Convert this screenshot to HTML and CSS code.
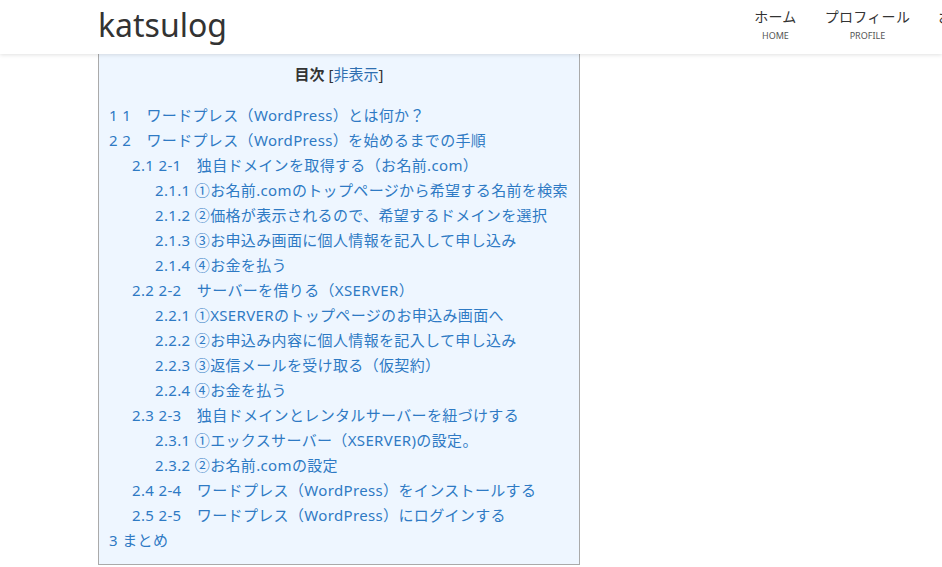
FILE: index.html
```html
<!DOCTYPE html>
<html lang="ja">
<head>
  <meta charset="UTF-8">
  <title>katsulog</title>
  <meta name="viewport" content="width=device-width, initial-scale=1.0">
  <link rel="stylesheet" href="styles.css">
</head>
<body>
<header class="site-header">
  <div class="header-inner">
    <div class="logo">katsulog</div>
    <nav class="global-nav">
      <a href="#"><span class="nav-ja">ホーム</span><span class="nav-en">HOME</span></a>
      <a href="#"><span class="nav-ja">プロフィール</span><span class="nav-en">PROFILE</span></a>
      <a href="#"><span class="nav-ja">お問い合わせ</span><span class="nav-en">CONTACT</span></a>
    </nav>
  </div>
</header>

<div class="content">
  <div class="toc">
    <p class="toc-title">目次 <span class="toc-toggle">[<a href="#">非表示</a>]</span></p>
    <ul class="toc-list">
      <li><a href="#">1 1　ワードプレス（WordPress）とは何か？</a></li>
      <li><a href="#">2 2　ワードプレス（WordPress）を始めるまでの手順</a>
        <ul>
          <li><a href="#">2.1 2-1　独自ドメインを取得する（お名前.com）</a>
            <ul>
              <li><a href="#">2.1.1 ①お名前.comのトップページから希望する名前を検索</a></li>
              <li><a href="#">2.1.2 ②価格が表示されるので、希望するドメインを選択</a></li>
              <li><a href="#">2.1.3 ③お申込み画面に個人情報を記入して申し込み</a></li>
              <li><a href="#">2.1.4 ④お金を払う</a></li>
            </ul>
          </li>
          <li><a href="#">2.2 2-2　サーバーを借りる（XSERVER）</a>
            <ul>
              <li><a href="#">2.2.1 ①XSERVERのトップページのお申込み画面へ</a></li>
              <li><a href="#">2.2.2 ②お申込み内容に個人情報を記入して申し込み</a></li>
              <li><a href="#">2.2.3 ③返信メールを受け取る（仮契約）</a></li>
              <li><a href="#">2.2.4 ④お金を払う</a></li>
            </ul>
          </li>
          <li><a href="#">2.3 2-3　独自ドメインとレンタルサーバーを紐づけする</a>
            <ul>
              <li><a href="#">2.3.1 ①エックスサーバー（XSERVER)の設定。</a></li>
              <li><a href="#">2.3.2 ②お名前.comの設定</a></li>
            </ul>
          </li>
          <li><a href="#">2.4 2-4　ワードプレス（WordPress）をインストールする</a></li>
          <li><a href="#">2.5 2-5　ワードプレス（WordPress）にログインする</a></li>
        </ul>
      </li>
      <li><a href="#">3 まとめ</a></li>
    </ul>
  </div>
</div>
</body>
</html>
```

FILE: styles.css
```css
body {
  margin: 0;
  font-family: "Noto Sans", "Noto Sans CJK JP", sans-serif;
  background: #fff;
  color: #333;
  overflow: hidden;
}
.site-header {
  position: relative;
  z-index: 2;
  height: 54px;
  background: #fff;
  box-shadow: 0 1px 4px rgba(0, 0, 0, 0.12);
}
.header-inner {
  display: flex;
  justify-content: space-between;
  align-items: flex-start;
  padding-left: 98px;
  margin-right: -96px;
}
.logo {
  font-size: 32px;
  line-height: 50px;
  color: #333;
}
.global-nav {
  display: flex;
  padding-top: 7px;
}
.global-nav a {
  display: flex;
  flex-direction: column;
  align-items: center;
  text-decoration: none;
  padding: 0 14px;
  color: #333;
}
.nav-ja {
  font-size: 14px;
  line-height: 20px;
  letter-spacing: 0.3px;
}
.nav-en {
  font-size: 9px;
  line-height: 18px;
  color: #555;
}
.content {
  padding-left: 98px;
}
.toc {
  width: 482px;
  background: #eef6ff;
  border: 1px solid #aaa;
  border-top: none;
  padding: 6px 0 12px 10px;
  box-sizing: border-box;
  height: 511px;
}
.toc-title {
  margin: 0 0 15px;
  text-align: center;
  font-size: 15px;
  line-height: 28px;
  font-weight: bold;
  color: #333;
  padding-right: 10px;
}
.toc-toggle {
  font-weight: normal;
}
.toc-toggle a {
  color: #2f6fb0;
  text-decoration: none;
}
.toc-list, .toc-list ul {
  list-style: none;
  margin: 0;
  padding: 0;
}
.toc-list ul {
  padding-left: 23px;
}
.toc-list li {
  font-size: 15px;
  line-height: 25px;
  letter-spacing: 0.35px;
  white-space: nowrap;
}
.toc-list a {
  color: #2e7ac4;
  text-decoration: none;
}
```
